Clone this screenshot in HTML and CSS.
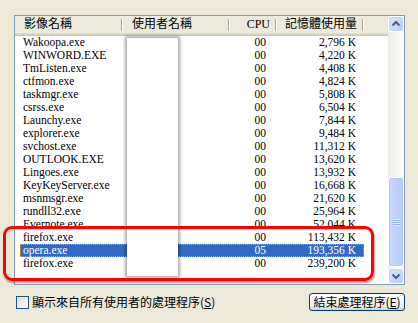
FILE: index.html
```html
<!DOCTYPE html>
<html>
<head>
<meta charset="UTF-8">
<title>工作管理員 - 處理程序</title>
<link rel="stylesheet" href="styles.css">
</head>
<body>
<div class="panel">
  <div class="list">
    <div class="list-main">
      <div class="header">
        <div class="hcell h-name">影像名稱</div>
        <div class="hcell h-user">使用者名稱</div>
        <div class="hcell h-cpu">CPU</div>
        <div class="hcell h-mem">記憶體使用量</div>
      </div>
      <div class="rows">
        <div class="row"><span class="c-name">Wakoopa.exe</span><span class="c-user"></span><span class="c-cpu">00</span><span class="c-mem">2,796 K</span></div>
        <div class="row"><span class="c-name">WINWORD.EXE</span><span class="c-user"></span><span class="c-cpu">00</span><span class="c-mem">4,220 K</span></div>
        <div class="row"><span class="c-name">TmListen.exe</span><span class="c-user"></span><span class="c-cpu">00</span><span class="c-mem">4,408 K</span></div>
        <div class="row"><span class="c-name">ctfmon.exe</span><span class="c-user"></span><span class="c-cpu">00</span><span class="c-mem">4,824 K</span></div>
        <div class="row"><span class="c-name">taskmgr.exe</span><span class="c-user"></span><span class="c-cpu">00</span><span class="c-mem">5,808 K</span></div>
        <div class="row"><span class="c-name">csrss.exe</span><span class="c-user"></span><span class="c-cpu">00</span><span class="c-mem">6,504 K</span></div>
        <div class="row"><span class="c-name">Launchy.exe</span><span class="c-user"></span><span class="c-cpu">00</span><span class="c-mem">7,844 K</span></div>
        <div class="row"><span class="c-name">explorer.exe</span><span class="c-user"></span><span class="c-cpu">00</span><span class="c-mem">9,484 K</span></div>
        <div class="row"><span class="c-name">svchost.exe</span><span class="c-user"></span><span class="c-cpu">00</span><span class="c-mem">11,312 K</span></div>
        <div class="row"><span class="c-name">OUTLOOK.EXE</span><span class="c-user"></span><span class="c-cpu">00</span><span class="c-mem">13,620 K</span></div>
        <div class="row"><span class="c-name">Lingoes.exe</span><span class="c-user"></span><span class="c-cpu">00</span><span class="c-mem">13,932 K</span></div>
        <div class="row"><span class="c-name">KeyKeyServer.exe</span><span class="c-user"></span><span class="c-cpu">00</span><span class="c-mem">16,668 K</span></div>
        <div class="row"><span class="c-name">msnmsgr.exe</span><span class="c-user"></span><span class="c-cpu">00</span><span class="c-mem">21,620 K</span></div>
        <div class="row"><span class="c-name">rundll32.exe</span><span class="c-user"></span><span class="c-cpu">00</span><span class="c-mem">25,964 K</span></div>
        <div class="row"><span class="c-name">Evernote.exe</span><span class="c-user"></span><span class="c-cpu">00</span><span class="c-mem">52,044 K</span></div>
        <div class="row"><span class="c-name">firefox.exe</span><span class="c-user"></span><span class="c-cpu">00</span><span class="c-mem">113,432 K</span></div>
        <div class="row selected"><span class="c-name">opera.exe</span><span class="c-user"></span><span class="c-cpu">05</span><span class="c-mem">193,356 K</span></div>
        <div class="row"><span class="c-name">firefox.exe</span><span class="c-user"></span><span class="c-cpu">00</span><span class="c-mem">239,200 K</span></div>
      </div>
    </div>
    <div class="scrollbar">
      <div class="sb-btn">
        <svg width="14" height="14" viewBox="0 0 14 14"><path d="M3.5 8.5 L7 5 L10.5 8.5" fill="none" stroke="#4d6185" stroke-width="2"/></svg>
      </div>
      <div class="sb-track">
        <div class="sb-thumb">
          <div class="grip"></div>
        </div>
      </div>
      <div class="sb-btn">
        <svg width="14" height="14" viewBox="0 0 14 14"><path d="M3.5 5.5 L7 9 L10.5 5.5" fill="none" stroke="#4d6185" stroke-width="2"/></svg>
      </div>
    </div>
  </div>

  <div class="footer">
    <label class="check"><span class="box"></span>顯示來自所有使用者的處理程序(<u>S</u>)</label>
    <button class="btn">結束處理程序(<u>E</u>)</button>
  </div>

  <!-- username column blanked out -->
  <div class="mask"></div>
  <!-- red annotation -->
  <div class="marker"></div>
</div>
</body>
</html>
```

FILE: styles.css
```css
body { margin: 0; background: #ece9d8; font-family: "Liberation Serif", "Noto Sans CJK TC", serif; font-size: 11.5px; color: #000; }
.panel { position: relative; width: 418px; height: 323px; padding: 15px 13px 0 14px; box-sizing: border-box; }

.list { display: flex; height: 268px; border: 1px solid #7f9db9; background: #fff; }
.list-main { flex: 1; overflow: hidden; }

.header { display: flex; height: 20px; background: #ebeadb; box-shadow: inset 0 -1px #cbc7b8, inset 0 -2px #d6d2c2, inset 0 -3px #e2decd; }
.hcell { box-sizing: border-box; height: 17px; line-height: 17px; font-size: 12px; white-space: nowrap;
  background: linear-gradient(#aca899, #aca899) no-repeat right 1px top 3px / 1px 12px,
              linear-gradient(#fff, #fff) no-repeat right 0 top 3px / 1px 12px; }
.h-name { width: 108px; padding-left: 9px; }
.h-user { width: 107px; padding-left: 9px; }
.h-cpu { width: 47px; padding-right: 7px; text-align: right; }
.h-mem { width: 87px; padding-right: 7px; text-align: right; }

.rows { padding-left: 5px; }
.row { display: flex; width: 344px; height: 13px; line-height: 13px; white-space: nowrap; }
.row span { box-sizing: border-box; display: block; }
.c-name { width: 103px; padding-left: 3px; }
.c-user { width: 107px; }
.c-cpu { width: 47px; padding-right: 11px; text-align: right; }
.c-mem { width: 87px; padding-right: 8px; text-align: right; }
.row.selected { background: #316ac5; color: #fff; outline: 1px dotted #d8a040; outline-offset: -1px; }

.scrollbar { width: 16px; display: flex; flex-direction: column; background: linear-gradient(to right, #eeede5, #fdfdfa); }
.sb-btn { height: 16px; box-sizing: border-box; border: 1px solid #fff; border-radius: 3px; background: linear-gradient(135deg, #dbe6fe, #b8cbf8); display: flex; align-items: center; justify-content: center; box-shadow: inset 0 0 0 1px #c4d4fa; }
.sb-btn svg { display: block; }
.sb-track { flex: 1; display: flex; flex-direction: column; justify-content: flex-end; padding-bottom: 1px; }
.sb-thumb { height: 90px; box-sizing: border-box; border: 1px solid #fff; border-radius: 3px; background: linear-gradient(to right, #c9d8fc, #b6cbf8); box-shadow: inset 0 0 0 1px #b3c7f4; display: flex; align-items: center; justify-content: center; }
.grip { width: 7px; height: 7px; background: repeating-linear-gradient(#eef4fe 0 1px, #8cb0f8 1px 2px); }

.footer { display: flex; justify-content: space-between; align-items: center; height: 18px; margin-top: 8px; padding-left: 2px; }
.check { display: flex; align-items: center; font-family: "Noto Sans CJK TC", sans-serif; font-size: 12px; line-height: 14px; }
.box { width: 13px; height: 13px; box-sizing: border-box; border: 1px solid #1c5180; background: linear-gradient(135deg, #dcdbd3, #fff); margin-right: 3px; }
.btn { height: 18px; width: 96px; padding: 0; box-sizing: border-box; border: 1px solid #003c74; border-radius: 3px; background: linear-gradient(#fff, #f0efea 70%, #d8d3c6); font-family: "Noto Sans CJK TC", sans-serif; font-size: 12px; line-height: 14px; color: #000; }

.mask { position: absolute; left: 127px; top: 38px; width: 51px; height: 238px; background: #fff; box-shadow: 0 0 3px 2px rgba(0, 0, 0, 0.33); }
.marker { position: absolute; left: 3px; top: 226px; width: 371px; height: 55px; box-sizing: border-box; border: 3px solid #f00; border-radius: 9px; box-shadow: 1px 2px 2px rgba(0, 0, 0, 0.35); }
```
